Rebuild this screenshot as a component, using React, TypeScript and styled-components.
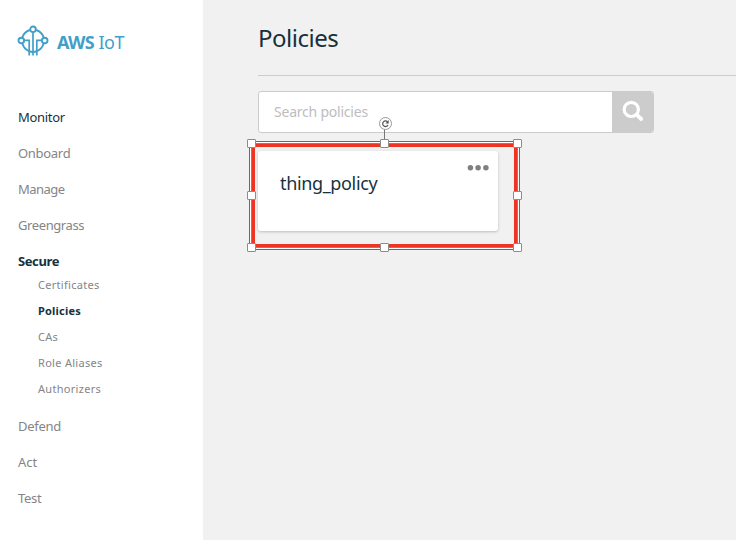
import React from 'react';
import styled, { createGlobalStyle } from 'styled-components';

const Global = createGlobalStyle`
  * { box-sizing: border-box; }
  body { margin: 0; background: #f1f1f1; font-family: "Noto Sans", sans-serif; overflow: hidden; }
`;

const Page = styled.div`
  display: flex;
  width: 736px;
  height: 540px;
`;

const Sidebar = styled.aside`
  width: 203px;
  flex: none;
  background: #fff;
  padding: 25px 0 0 17px;
`;

const Brand = styled.div`
  display: flex;
  align-items: center;
  gap: 8px;
  height: 32px;
  color: #429fc7;
  font-size: 18px;
  line-height: 32px;
  white-space: nowrap;
`;

const BrandName = styled.span`
  letter-spacing: -0.4px;
  padding-top: 2px;
  b { font-weight: 700; letter-spacing: -0.65px; }
`;

const Nav = styled.nav`
  display: flex;
  flex-direction: column;
  padding: 42px 0 0 1px;
`;

const NavItem = styled.a<{ $tone?: 'dark' | 'bold'; $track?: number }>`
  height: 36px;
  line-height: 36px;
  font-size: 13px;
  letter-spacing: ${(p) => p.$track ?? -0.3}px;
  color: ${(p) => (p.$tone ? '#16323e' : '#858585')};
  font-weight: ${(p) => (p.$tone === 'bold' ? 700 : 400)};
`;

const SubNav = styled.div`
  display: flex;
  flex-direction: column;
  padding: 0 0 6px 20px;
  margin-top: -7px;
`;

const SubItem = styled.a<{ $active?: boolean; $track?: number }>`
  height: 26px;
  line-height: 26px;
  font-size: 11px;
  letter-spacing: ${(p) => p.$track ?? 0.3}px;
  color: ${(p) => (p.$active ? '#16323e' : '#858585')};
  font-weight: ${(p) => (p.$active ? 700 : 400)};
`;

const Main = styled.main`
  flex: 1;
  padding-left: 55px;
`;

const Title = styled.h1`
  margin: 0;
  height: 76px;
  padding-top: 21px;
  line-height: 34px;
  border-bottom: 1px solid #ccc;
  color: #16323e;
  font-size: 24px;
  font-weight: 400;
  letter-spacing: -0.5px;
`;

const Search = styled.div`
  display: flex;
  width: 396px;
  height: 42px;
  margin-top: 15px;
  border: 1px solid #ccc;
  border-radius: 3px;
  background: #fff;
  overflow: hidden;
`;

const Placeholder = styled.span`
  flex: 1;
  padding-left: 15px;
  line-height: 40px;
  font-size: 14px;
  letter-spacing: -0.22px;
  color: #bdbdbd;
`;

const SearchButton = styled.span`
  width: 41px;
  background: #ccc;
  svg { display: block; }
`;

const Stage = styled.section`
  position: relative;
  padding-top: 18px;
`;

const Card = styled.article`
  display: flex;
  justify-content: space-between;
  width: 240px;
  height: 80px;
  padding: 13px 9px 0 22px;
  border-radius: 3px;
  background: #fff;
  box-shadow: 0 1px 3px rgba(0, 0, 0, 0.22);
`;

const CardTitle = styled.h2`
  margin: 6px 0 0;
  font-size: 18px;
  line-height: 26px;
  font-weight: 400;
  letter-spacing: -0.35px;
  color: #16323e;
`;

const Selection = styled.svg`
  position: absolute;
  left: -13px;
  top: -18px;
`;

const Logo = () => (
  <svg width="32" height="32" viewBox="0 0 32 32" fill="none" stroke="#429fc7" strokeWidth="1.9">
    <path d="M19.2 5A11.5 11.5 0 0 1 26.6 12.2M12.8 5A11.5 11.5 0 0 0 5.4 12.2M5.4 18.6A11.5 11.5 0 0 0 12 26.2Q16 28 20 26.2A11.5 11.5 0 0 0 26.6 18.6" />
    <circle cx="16" cy="4.3" r="2.8" />
    <circle cx="4.3" cy="15.5" r="2.8" />
    <circle cx="27.7" cy="15.5" r="2.8" />
    <path d="M16 7.4V30.5M8 15.3H12.2V30.5M24 15.3H19.8V30.5" strokeWidth="1.7" />
  </svg>
);

const MoreIcon = () => (
  <svg width="22" height="8" viewBox="0 0 22 8" fill="#808080">
    <circle cx="3.4" cy="3.7" r="2.75" />
    <circle cx="11.1" cy="3.7" r="2.75" />
    <circle cx="18.9" cy="3.7" r="2.75" />
  </svg>
);

const handles = [
  [251.5, 143.5], [384.5, 143.5], [517.5, 143.5],
  [251.5, 195.5], [517.5, 195.5],
  [251.5, 247.5], [384.5, 247.5], [517.5, 247.5],
];

const SelectionFrame = () => (
  <Selection width="280" height="140" viewBox="245 115 280 140" fill="none">
    <rect x="253.5" y="145.5" width="262" height="100" stroke="#ee3424" strokeWidth="3" />
    <rect x="251.5" y="143.5" width="266" height="104" stroke="#858585" />
    <rect x="250.5" y="142.5" width="268" height="106" stroke="#fff" />
    <rect x="249.5" y="141.5" width="270" height="108" stroke="#e03a2c" />
    <path d="M384.5 129V140" stroke="#777" />
    {handles.map(([x, y]) => (
      <rect key={`${x}-${y}`} x={x - 4} y={y - 4} width="8" height="8" rx="0.5" fill="#fff" stroke="#8c8c8c" />
    ))}
    <circle cx="385.5" cy="123.5" r="6" fill="#fff" stroke="#999" />
    <path d="M387.6 121.9A2.8 2.8 0 1 0 388 125" stroke="#555" strokeWidth="1.2" />
    <path d="M388.7 120V123.4H385.4Z" fill="#555" />
  </Selection>
);

const App = () => (
  <Page>
    <Global />
    <Sidebar>
      <Brand><Logo /><BrandName><b>AWS</b> IoT</BrandName></Brand>
      <Nav>
        <NavItem $tone="dark">Monitor</NavItem>
        <NavItem>Onboard</NavItem>
        <NavItem $track={-0.55}>Manage</NavItem>
        <NavItem $track={-0.4}>Greengrass</NavItem>
        <NavItem $tone="bold" $track={-0.4}>Secure</NavItem>
        <SubNav>
          <SubItem>Certificates</SubItem>
          <SubItem $active $track={0.2}>Policies</SubItem>
          <SubItem>CAs</SubItem>
          <SubItem>Role Aliases</SubItem>
          <SubItem>Authorizers</SubItem>
        </SubNav>
        <NavItem>Defend</NavItem>
        <NavItem $track={0}>Act</NavItem>
        <NavItem>Test</NavItem>
      </Nav>
    </Sidebar>
    <Main>
      <Title>Policies</Title>
      <Search>
        <Placeholder>Search policies</Placeholder>
        <SearchButton>
          <svg width="41" height="40" viewBox="0 0 41 40" fill="none" stroke="#fff">
            <circle cx="19.3" cy="17.4" r="7.1" strokeWidth="3.2" />
            <path d="M24.6 22.7L29.2 27" strokeWidth="3.8" strokeLinecap="round" />
          </svg>
        </SearchButton>
      </Search>
      <Stage>
        <Card>
          <CardTitle>thing_policy</CardTitle>
          <MoreIcon />
        </Card>
        <SelectionFrame />
      </Stage>
    </Main>
  </Page>
);

export default App;
